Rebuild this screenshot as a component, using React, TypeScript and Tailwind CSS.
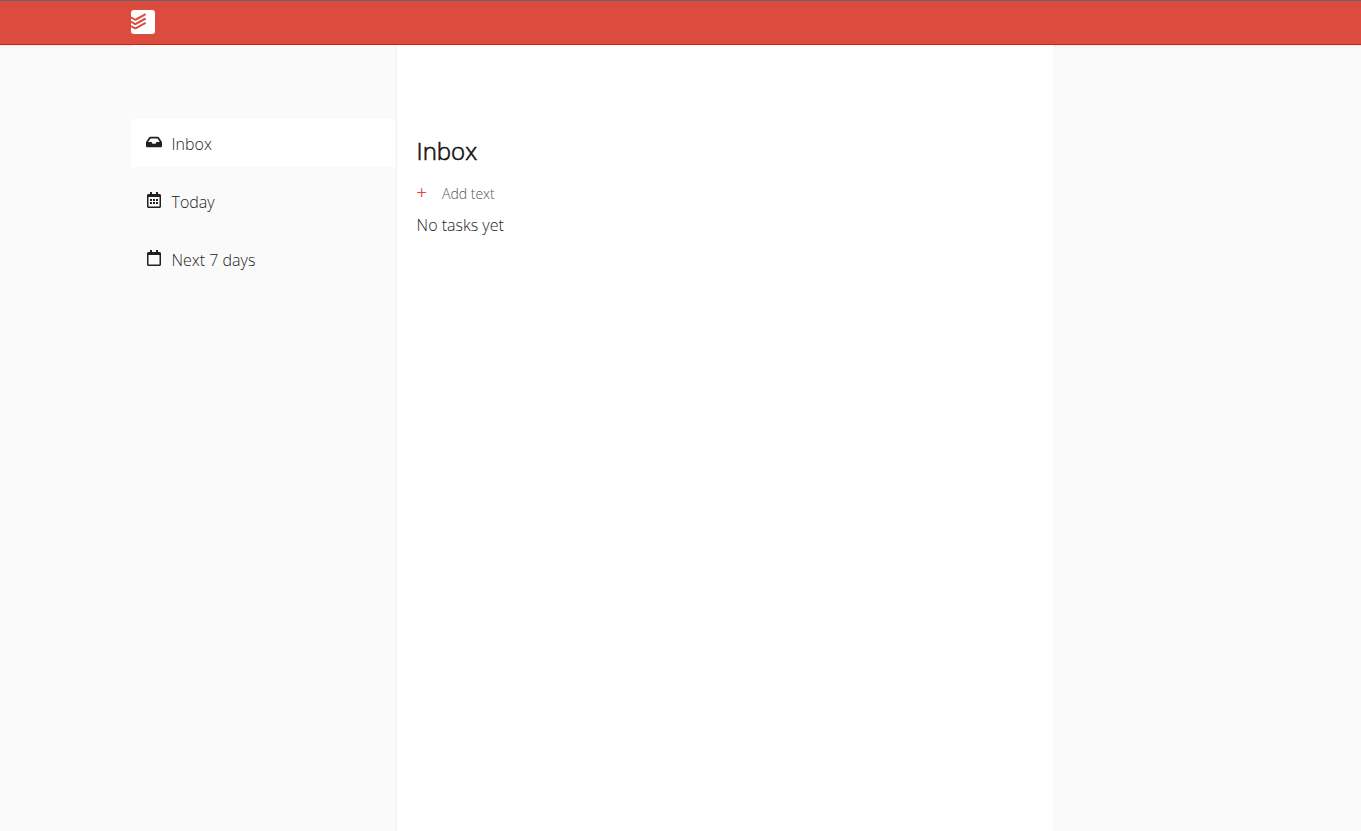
import React from "react";
import { FaInbox, FaRegCalendarAlt, FaRegCalendar } from "react-icons/fa";

function Logo() {
  return (
    <svg width="24" height="24" viewBox="0 0 24 24" className="block">
      <rect width="24" height="24" rx="3" fill="#fff" />
      <g fill="none" stroke="#db4c3f" strokeWidth="2" strokeLinejoin="round">
        <path d="M0 7.4l3.6 2.1c.5.3.9.3 1.4 0l9.6-5.3" />
        <path d="M0 11.7l3.6 2.1c.5.3.9.3 1.4 0l9.6-5.3" />
        <path d="M0 16l3.6 2.1c.5.3.9.3 1.4 0l9.6-5.3" />
      </g>
    </svg>
  );
}

const items = [
  { label: "Inbox", Icon: FaInbox, active: true },
  { label: "Today", Icon: FaRegCalendarAlt, active: false },
  { label: "Next 7 days", Icon: FaRegCalendar, active: false },
];

export default function App() {
  return (
    <div className="flex h-[831px] flex-col bg-[#fafafa] font-['Open_Sans',sans-serif] font-light text-[#202020]">
      <header className="h-[45px] border-t border-b border-t-[#666] border-b-[#d1240f] bg-[#db4c3f] pt-[9px] pl-[131px]">
        <Logo />
      </header>
      <div className="flex flex-1">
        <div className="h-[3px] w-[131px] bg-linear-to-b from-[#ededed] to-[#fafafa]" />
        <nav className="flex w-[266px] flex-col gap-[10px] border-r border-[#f1f1f1] pt-[74px]">
          {items.map(({ label, Icon, active }) => (
            <a key={label} className={active ? "mr-px flex h-12 items-center bg-white pl-[15px]" : "mr-px flex h-12 items-center pl-[15px]"}>
              <Icon className="mb-[3px] size-4" />
              <span className="ml-[9.5px] pt-[2px] text-base text-[#222]">{label}</span>
            </a>
          ))}
        </nav>
        <main className="w-[656px] bg-white pt-[90px] pl-[19.6px]">
          <h1 className="text-2xl leading-8 text-[#111] [-webkit-text-stroke:0.6px_#111]">Inbox</h1>
          <div className="mt-4 flex h-5 items-center text-sm">
            <span className="w-[25.4px] pb-[3px] text-lg text-[#dd4b39] [-webkit-text-stroke:0.3px_#dd4b39]">+</span>
            <span className="pt-[2px] text-[#555]">Add text</span>
          </div>
          <p className="mt-[10px] text-base text-[#222]">No tasks yet</p>
        </main>
        <div className="h-[3px] flex-1 bg-linear-to-b from-[#ededed] to-[#fafafa]" />
      </div>
    </div>
  );
}
